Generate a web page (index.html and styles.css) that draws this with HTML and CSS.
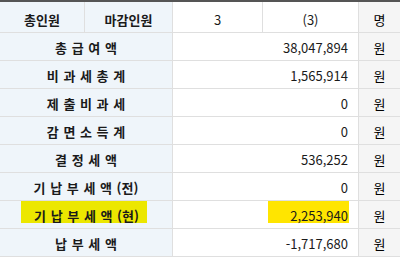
FILE: index.html
```html
<!DOCTYPE html>
<html lang="ko">
<head>
<meta charset="utf-8">
<link rel="stylesheet" href="styles.css">
</head>
<body>
<div class="sheet">
  <div class="cell head lab"><span class="t">총인원</span></div>
  <div class="cell head lab"><span class="t">마감인원</span></div>
  <div class="cell head plain"><span class="t num">3</span></div>
  <div class="cell head plain"><span class="t num">(3)</span></div>
  <div class="cell head unit"><span class="t">명</span></div>

  <div class="cell lab span2"><span class="t sp">총 급 여 액</span></div>
  <div class="cell val span2"><span class="t">38,047,894</span></div>
  <div class="cell unit"><span class="t">원</span></div>

  <div class="cell lab span2"><span class="t sp">비 과 세 총 계</span></div>
  <div class="cell val span2"><span class="t">1,565,914</span></div>
  <div class="cell unit"><span class="t">원</span></div>

  <div class="cell lab span2"><span class="t sp">제 출 비 과 세</span></div>
  <div class="cell val span2"><span class="t">0</span></div>
  <div class="cell unit"><span class="t">원</span></div>

  <div class="cell lab span2"><span class="t sp">감 면 소 득 계</span></div>
  <div class="cell val span2"><span class="t">0</span></div>
  <div class="cell unit"><span class="t">원</span></div>

  <div class="cell lab span2"><span class="t sp">결 정 세 액</span></div>
  <div class="cell val span2"><span class="t">536,252</span></div>
  <div class="cell unit"><span class="t">원</span></div>

  <div class="cell lab span2"><span class="t sp">기 납 부 세 액 (전)</span></div>
  <div class="cell val span2"><span class="t">0</span></div>
  <div class="cell unit"><span class="t">원</span></div>

  <div class="cell lab span2"><span class="t sp hl hl-lab">기 납 부 세 액 (현)</span></div>
  <div class="cell val span2"><span class="t hl hl-val">2,253,940</span></div>
  <div class="cell unit"><span class="t">원</span></div>

  <div class="cell lab span2 last"><span class="t sp">납 부 세 액</span></div>
  <div class="cell val span2 last"><span class="t">-1,717,680</span></div>
  <div class="cell unit last"><span class="t">원</span></div>
</div>
</body>
</html>
```
FILE: styles.css
```css
* { box-sizing: border-box; }
html, body { margin: 0; padding: 0; background: #ffffff; }
body {
  font-family: "Noto Sans CJK KR", "Noto Sans", sans-serif;
  font-size: 13px;
  color: #1a1a1a;
}
.sheet {
  width: 400px;
  display: grid;
  grid-template-columns: 85px 88px 90px 96px 41px;
  grid-template-rows: 31px;
  grid-auto-rows: 28px;
  border-top: 2px solid #555555;
}
.cell {
  display: flex;
  align-items: flex-start;
  justify-content: center;
  border-bottom: 1px solid #dfdfdf;
  border-right: 1px solid #dfdfdf;
  background: #ffffff;
  white-space: nowrap;
}
.t {
  display: inline-block;
  padding-top: 8px;
  line-height: 13px;
}
.head .t { padding-top: 11px; }
.lab { background: #eff5fa; font-weight: 700; }
.sp { word-spacing: 1px; }
.unit { background: #f5f5f5; border-right: none; color: #000000; }
.plain { background: #ffffff; }
.span2 { grid-column: span 2; }
.val { justify-content: flex-end; padding-right: 9px; }
.val .t { padding-right: 1px; }
.hl { padding-bottom: 1px; }
.hl-lab { background: #ece700; padding-left: 13px; padding-right: 8px; margin-right: 4px; }
.hl-val { background: #ffe500; width: 81px; text-align: right; }
```
